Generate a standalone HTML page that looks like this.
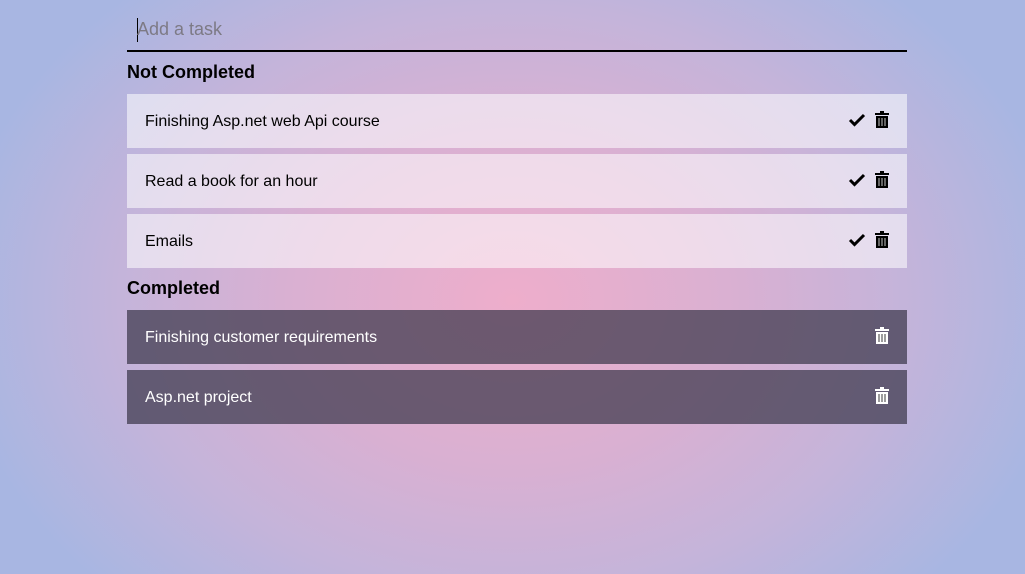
<!DOCTYPE html>
<html><head><style>
html,body{margin:0;height:574px;overflow:hidden}
body{background:radial-gradient(ellipse 560px 420px at 512px 300px,#eeaecb 0%,#d9b0d2 40%,#c4b4da 70%,#a8b6e2 100%);font-family:"Liberation Sans",sans-serif;}
.wrap{position:absolute;left:127px;width:780px;top:0}
.inp{height:52px;border-bottom:2px solid #000;box-sizing:border-box;position:relative}
.inp span{position:absolute;left:10px;top:19px;font-size:18px;color:#7d7a85}
.inp i{position:absolute;left:10px;top:18px;width:1px;height:24px;background:#000}
h3{margin:0;font-size:18px;font-weight:bold;height:42px;line-height:40px}
.it{height:54px;margin-bottom:6px;background:rgba(255,255,255,0.55);position:relative;font-size:16px;line-height:56px;padding-left:18px}
.dk{background:rgba(60,55,75,0.72);color:#fff}
.ic{position:absolute;top:17px}
</style></head><body><div class="wrap">
<div class="inp"><i></i><span>Add a task</span></div>
<h3>Not Completed</h3>
<div class="it">Finishing Asp.net web Api course<svg class="ic" style="left:721px" width="18" height="18" viewBox="0 0 18 18"><path d="M2 9l4.5 4.5L16 4" stroke="#000" stroke-width="3" fill="none"/></svg><svg class="ic" style="left:748px" width="14" height="17" viewBox="0 0 14 17"><path d="M0 2h14v2H0zM5 0h4v2H5zM1 5h12v12H1z" fill="#000"/><path d="M4 7v8M7 7v8M10 7v8" stroke="#fff" stroke-width="1.3" opacity=".6"/></svg></div>
<div class="it">Read a book for an hour<svg class="ic" style="left:721px" width="18" height="18" viewBox="0 0 18 18"><path d="M2 9l4.5 4.5L16 4" stroke="#000" stroke-width="3" fill="none"/></svg><svg class="ic" style="left:748px" width="14" height="17" viewBox="0 0 14 17"><path d="M0 2h14v2H0zM5 0h4v2H5zM1 5h12v12H1z" fill="#000"/><path d="M4 7v8M7 7v8M10 7v8" stroke="#fff" stroke-width="1.3" opacity=".6"/></svg></div>
<div class="it">Emails<svg class="ic" style="left:721px" width="18" height="18" viewBox="0 0 18 18"><path d="M2 9l4.5 4.5L16 4" stroke="#000" stroke-width="3" fill="none"/></svg><svg class="ic" style="left:748px" width="14" height="17" viewBox="0 0 14 17"><path d="M0 2h14v2H0zM5 0h4v2H5zM1 5h12v12H1z" fill="#000"/><path d="M4 7v8M7 7v8M10 7v8" stroke="#fff" stroke-width="1.3" opacity=".6"/></svg></div>
<h3 style="height:36px;line-height:28px">Completed</h3>
<div class="it dk">Finishing customer requirements<svg class="ic" style="left:748px" width="14" height="17" viewBox="0 0 14 17"><path d="M0 2h14v2H0zM5 0h4v2H5zM1 5h12v12H1z" fill="#fff"/><path d="M4 7v8M7 7v8M10 7v8" stroke="#666" stroke-width="1.3"/></svg></div>
<div class="it dk">Asp.net project<svg class="ic" style="left:748px" width="14" height="17" viewBox="0 0 14 17"><path d="M0 2h14v2H0zM5 0h4v2H5zM1 5h12v12H1z" fill="#fff"/><path d="M4 7v8M7 7v8M10 7v8" stroke="#666" stroke-width="1.3"/></svg></div>
</div></body></html>
